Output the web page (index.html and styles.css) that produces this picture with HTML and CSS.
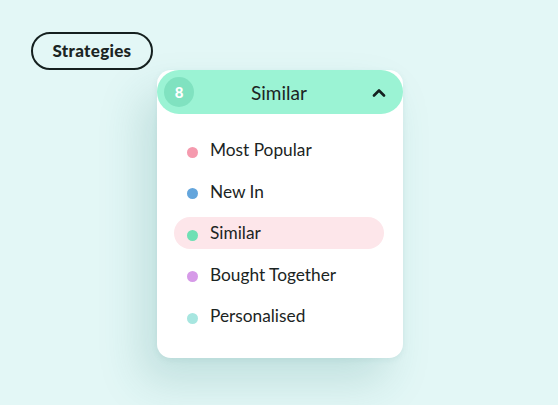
FILE: index.html
```html
<!DOCTYPE html>
<html>
<head>
  <meta charset="UTF-8">
  <title>Strategies</title>
  <link rel="stylesheet" href="styles.css">
</head>
<body>
  <div class="page">
    <div class="tag">Strategies</div>

    <div class="dropdown">
      <div class="dropdown-head">
        <span class="count">8</span>
        <span class="current">Similar</span>
        <span class="chevron">
          <svg width="14" height="9" viewBox="0 0 14 9">
            <path d="M2 7.5 L7 2.5 L12 7.5" fill="none" stroke="#14201f" stroke-width="2.6" stroke-linecap="round" stroke-linejoin="round"/>
          </svg>
        </span>
      </div>
      <ul class="options">
        <li class="option"><span class="dot pink"></span>Most Popular</li>
        <li class="option"><span class="dot blue"></span>New In</li>
        <li class="option active"><span class="dot green"></span>Similar</li>
        <li class="option"><span class="dot purple"></span>Bought Together</li>
        <li class="option"><span class="dot teal"></span>Personalised</li>
      </ul>
    </div>
  </div>
</body>
</html>
```

FILE: styles.css
```css
/* page */
html, body {
  margin: 0;
  height: 100%;
}
body {
  background: #e3f7f6;
  font-family: "Lato", "Noto Sans", sans-serif;
  color: #1b2423;
}
.page {
  padding: 32px 0 0 31px;
}

/* strategies pill */
.tag {
  display: inline-block;
  box-sizing: border-box;
  width: 122px;
  height: 38px;
  line-height: 34px;
  border: 2px solid #15201f;
  border-radius: 19px;
  text-align: center;
  font-size: 17px;
  font-weight: 900;
  letter-spacing: 0.3px;
}

/* dropdown card */
.dropdown {
  width: 246px;
  margin-left: 126px;
  background: #fff;
  border-radius: 14px;
  box-shadow: -16px 24px 44px rgba(40, 120, 115, 0.18), 0 2px 6px rgba(40, 120, 115, 0.08);
}
.dropdown-head {
  display: grid;
  grid-template-columns: 30px 1fr 30px;
  align-items: center;
  height: 44px;
  padding: 0 9px 0 7px;
  background: #9bf3d4;
  border-radius: 22px;
}
.count {
  width: 30px;
  height: 30px;
  border-radius: 50%;
  background: #80e2c0;
  color: #fff;
  font-size: 15px;
  font-weight: 900;
  line-height: 30px;
  text-align: center;
}
.current {
  text-align: center;
  font-size: 19px;
}
.chevron {
  display: flex;
  justify-content: center;
}

.options {
  list-style: none;
  margin: 0;
  padding: 20px 19px 26px 17px;
  display: flex;
  flex-direction: column;
  gap: 9.5px;
}
.option {
  display: flex;
  align-items: center;
  gap: 12px;
  height: 32px;
  padding-left: 13px;
  border-radius: 16px;
  font-size: 17.3px;
  line-height: 1;
}
.option.active {
  background: #fde6ea;
}
.dot {
  width: 11px;
  height: 11px;
  border-radius: 50%;
  margin-top: 4px;
}
.pink { background: #f59aae; }
.blue { background: #63a5dc; }
.green { background: #6fe0b4; }
.purple { background: #d69ae8; }
.teal { background: #a7e6e0; }
```
